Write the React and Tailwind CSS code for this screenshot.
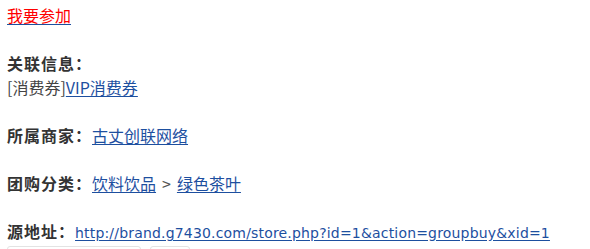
export default function App() {
  const cjk = { fontFamily: '"Noto Sans CJK SC", sans-serif' };
  const link = 'text-[#1d4f9f] underline underline-offset-2';
  const label = 'font-bold tracking-[1px]';

  return (
    <div className="w-[590px] h-[249px] overflow-hidden bg-white pl-[7px] pt-[3px] text-[16px] leading-[24px] text-[#333]" style={cjk}>
      <p>
        <a href="#" className={link}><span className="text-[#ff0000]">我要参加</span></a>
      </p>
      <p className={`mt-[24px] ${label}`}>关联信息：</p>
      <p className="text-[#444]">
        [消费券]<a href="#" className={link}>VIP消费券</a>
      </p>
      <p className="mt-[24px]">
        <span className={label}>所属商家：</span>
        <a href="#" className={link}>古丈创联网络</a>
      </p>
      <p className="mt-[24px]">
        <span className={label}>团购分类：</span>
        <a href="#" className={link}>饮料饮品</a>
        <span className="mx-[6px] text-[#555]">&gt;</span>
        <a href="#" className={link}>绿色茶叶</a>
      </p>
      <p className="mt-[24px]">
        <span className={label}>源地址：</span>
        <a href="#" className={`${link} text-[14px] tracking-[0.18px]`} style={{ fontFamily: '"DejaVu Sans", sans-serif' }}>
          http://brand.g7430.com/store.php?id=1&amp;action=groupbuy&amp;xid=1
        </a>
      </p>
      <div className="mt-[1px] flex gap-[9px]">
        <div className="h-[12px] w-[134px] rounded-t-[3px] border border-[#e3e3e3]" />
        <div className="h-[12px] w-[40px] rounded-t-[3px] border border-[#e3e3e3]" />
      </div>
    </div>
  );
}
